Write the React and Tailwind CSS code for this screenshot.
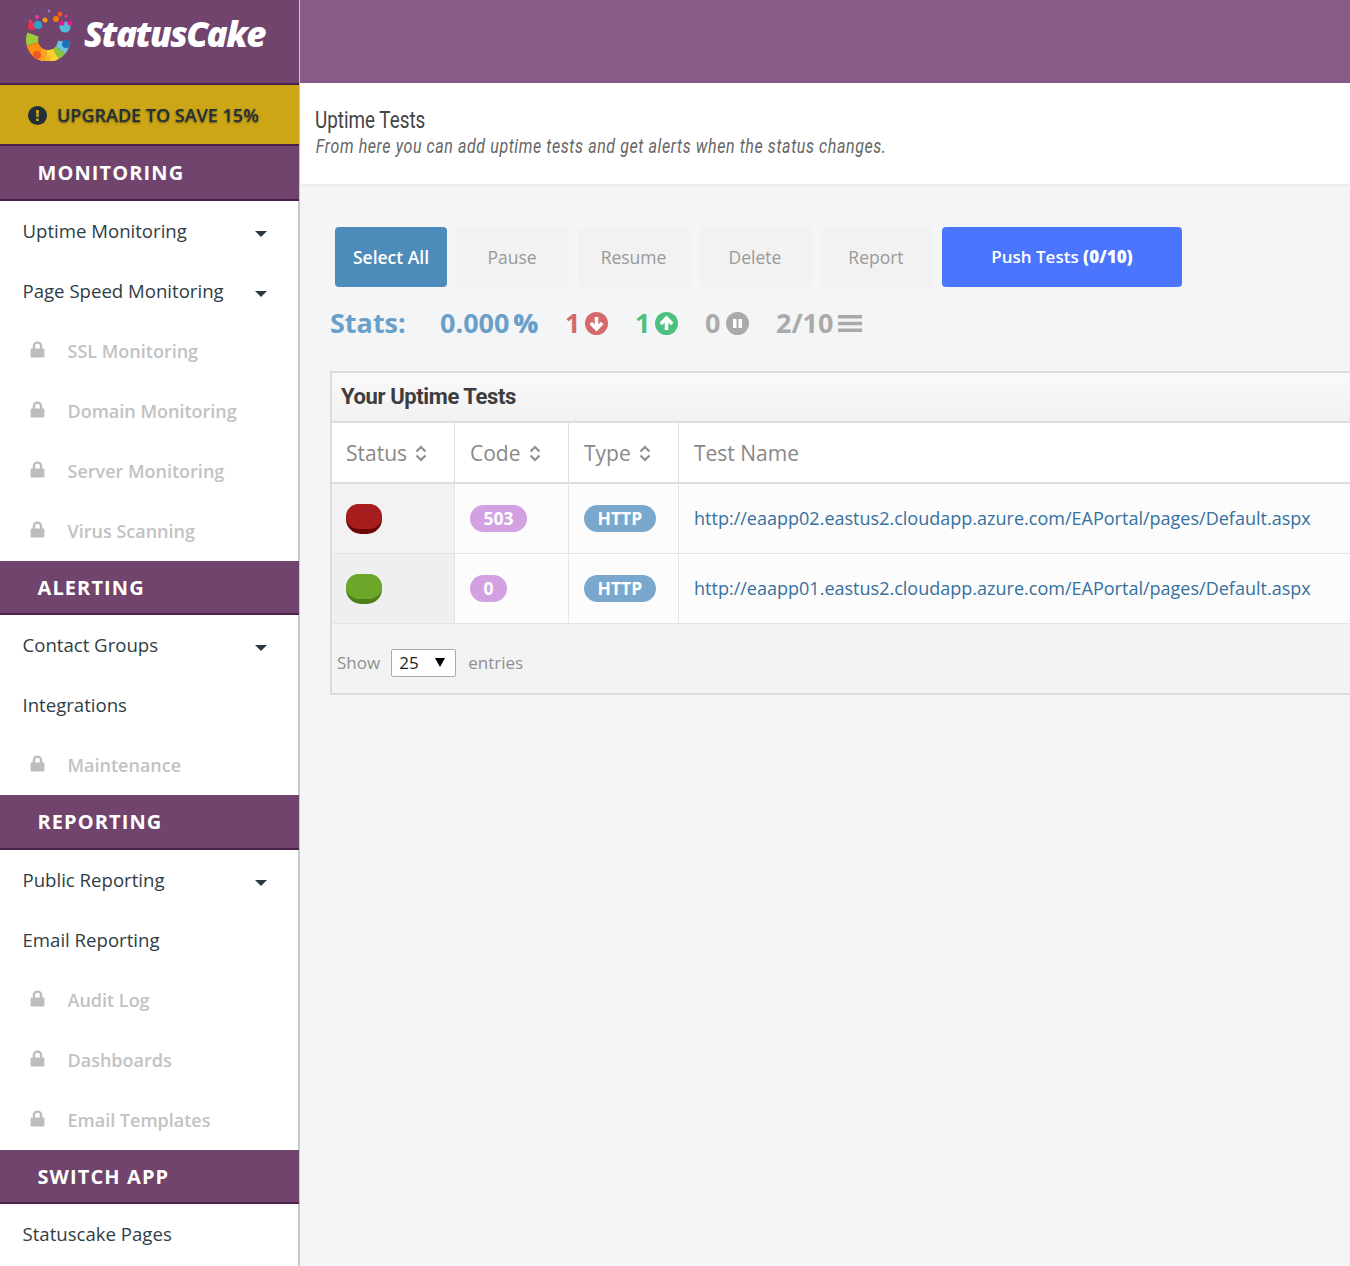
import React from "react";

const Caret = () => (
    <svg width="12" height="6" viewBox="0 0 12 6" className="absolute right-[31px] top-[30px]">
        <path d="M0 0h12L6 6z" fill="#2b3a42" />
    </svg>
);

const Lock = () => (
    <svg width="15" height="17" viewBox="0 0 14 16" className="shrink-0">
        <path
            d="M2.500 7V4.800C2.500 2.200 4.400.5 7 .5s4.500 1.700 4.500 4.300V7h1c.6 0 1 .4 1 1v6.500c0 .6-.4 1-1 1h-11c-.6 0-1-.4-1-1V8c0-.6.4-1 1-1zm2.300 0h4.400V4.800C9.200 3.500 8.300 2.700 7 2.700s-2.200.8-2.200 2.100z"
            fill="#bdbdbd"
        />
    </svg>
);

const NavItem = ({ label, caret, locked }) => (
    <div className="relative flex h-[60px] items-center">
        {locked ? (
            <div className="flex items-center pt-[1px]">
                <span className="ml-[30px] mb-[4px] w-[37.500px]">
                    <Lock />
                </span>
                <span className="text-[18px] font-semibold text-[#c2c2c2]">{label}</span>
            </div>
        ) : (
            <span className="ml-[22.500px] pb-[1px] text-[18.600px] font-medium text-[#2f3d45]">{label}</span>
        )}
        {caret && <Caret />}
    </div>
);

const NavHeading = ({ label, height }) => (
    <div
        className={`relative -mr-[1px] flex items-center border-b-2 border-[#4d1f4b] bg-[#70446c] pl-[37.500px] text-[20px] font-bold tracking-[1.1px] text-white ${height}`}
    >
        {label}
    </div>
);

const Logo = () => (
    <svg width="52" height="52" viewBox="0 0 52 52" className="shrink-0">
        <g fill="none" strokeWidth="12">
            <path d="M9 25.500A16 16 0 0 0 8.500 35.100" stroke="#9ccb3b" />
            <path d="M8.500 35.100A16 16 0 0 0 14.800 44.100" stroke="#fb8c14" />
            <path d="M14.800 44.100A16 16 0 0 0 22.600 46.900" stroke="#f9a51c" />
            <path d="M22.600 46.900A16 16 0 0 0 32 44.900" stroke="#fdd22a" />
            <path d="M32 44.900A16 16 0 0 0 36.600 40.900" stroke="#8cc63f" />
            <path d="M36.600 40.900A16 16 0 0 0 40 32.400" stroke="#6cc5e0" />
        </g>
        <circle cx="13" cy="46" r="4" fill="#f4562a" />
        <circle cx="24" cy="49" r="3" fill="#f7b733" />
        <circle cx="42" cy="35" r="4" fill="#1a72b8" />
        <circle cx="8" cy="17" r="4" fill="#f0304a" />
        <circle cx="14" cy="16" r="4" fill="#2aa5c8" />
        <circle cx="13" cy="8" r="2" fill="#e83fa0" />
        <circle cx="6" cy="12" r="1.500" fill="#e8407a" />
        <circle cx="25" cy="2" r="1.500" fill="#a070c0" />
        <circle cx="21" cy="11" r="2.500" fill="#f7941d" />
        <circle cx="32" cy="10" r="3" fill="#f57c00" />
        <circle cx="36" cy="5" r="2.500" fill="#f0552a" />
        <circle cx="42" cy="7" r="1.500" fill="#e83f8f" />
        <circle cx="41" cy="18" r="5.500" fill="#54bbdc" />
        <circle cx="38" cy="14" r="2.500" fill="#e6178d" />
        <circle cx="46" cy="14" r="2.500" fill="#e6178d" />
    </svg>
);

const Sort = () => (
    <svg width="12" height="17" viewBox="0 0 12 17" className="ml-[8px]">
        <path d="M1.500 6.500 6 2l4.500 4.500M1.500 10.500 6 15l4.500-4.500" fill="none" stroke="#8f8f8f" strokeWidth="2.200" />
    </svg>
);

const Pill = ({ children, color }) => (
    <span className={`inline-flex h-[27px] items-center rounded-full px-[13.500px] text-[17.500px] font-bold text-white ${color}`}>
        {children}
    </span>
);

const Dome = ({ top, bottom }) => (
    <div className={`h-[30px] w-[36px] rounded-[15px] ${bottom}`}>
        <div className={`h-[25px] w-[36px] rounded-[14px] ${top}`}></div>
    </div>
);

const Row = ({ dome, code, url, tdBg }) => (
    <div className="flex h-[70px] border-b border-[#e4e4e4] bg-[#fcfcfc]">
        <div className={`flex w-[123px] items-center border-r border-[#e4e4e4] pl-[14px] ${tdBg}`}>{dome}</div>
        <div className="flex w-[114px] items-center border-r border-[#e4e4e4] pl-[15px]">
            <Pill color="bg-[#d3a1e2]">{code}</Pill>
        </div>
        <div className="flex w-[110px] items-center border-r border-[#e4e4e4] pl-[15px]">
            <Pill color="bg-[#7aa7cc]">HTTP</Pill>
        </div>
        <div className="flex flex-1 items-center pl-[15px] text-[18.030px] text-[#35709f]">{url}</div>
    </div>
);

const ActionButton = ({ label, width }) => (
    <div className={`flex h-[60px] items-center justify-center rounded-[4px] bg-[#f2f2f2] pr-[2px] text-[17.500px] text-[#999999] ${width}`}>
        {label}
    </div>
);

const Th = ({ label, width, first }) => (
    <div className={`flex items-center border-r border-[#dddddd] pt-[2px] ${first ? "pl-[14px]" : "pl-[15px]"} ${width}`}>
        {label}
        <Sort />
    </div>
);

const App = () => {
    return (
        <div className="flex h-[1266px] w-[1350px] overflow-hidden bg-[#f4f5f7] font-['Open_Sans',sans-serif]">
            <aside className="h-full w-[300px] shrink-0 border-r-2 border-[#c9c9c9] bg-white">
                <div className="relative -mr-[1px] flex h-[85px] items-start border-b-2 border-[#4d1f4b] bg-[#70446c] pl-[24px] pt-[9px]">
                    <Logo />
                    <span className="ml-[8px] mt-[2px] text-[35px] leading-[46px] font-extrabold italic tracking-[-1.6px] text-white">
                        StatusCake
                    </span>
                </div>
                <div className="relative -mr-[1px] flex h-[61px] items-center border-b-2 border-[#4d1f4b] bg-[#cca617] pt-[2px] pl-[28px] text-[18px] font-semibold text-[#22303a] [text-shadow:0_1px_2px_rgba(0,0,0,0.5)]">
                    <svg width="19" height="19" viewBox="0 0 19 19" className="mr-[10px] shrink-0">
                        <circle cx="9.500" cy="9.500" r="9.500" fill="#22303a" />
                        <path d="M8 4h3l-.4 7H8.400zM8.200 12.500h2.600V15H8.200z" fill="#cca617" />
                    </svg>
                    UPGRADE TO SAVE 15%
                </div>
                <NavHeading label="MONITORING" height="h-[55px]" />
                <NavItem label="Uptime Monitoring" caret />
                <NavItem label="Page Speed Monitoring" caret />
                <NavItem label="SSL Monitoring" locked />
                <NavItem label="Domain Monitoring" locked />
                <NavItem label="Server Monitoring" locked />
                <NavItem label="Virus Scanning" locked />
                <NavHeading label="ALERTING" height="h-[54px] pt-[2px]" />
                <NavItem label="Contact Groups" caret />
                <NavItem label="Integrations" />
                <NavItem label="Maintenance" locked />
                <NavHeading label="REPORTING" height="h-[55px]" />
                <NavItem label="Public Reporting" caret />
                <NavItem label="Email Reporting" />
                <NavItem label="Audit Log" locked />
                <NavItem label="Dashboards" locked />
                <NavItem label="Email Templates" locked />
                <NavHeading label="SWITCH APP" height="h-[54px] pt-[2px]" />
                <NavItem label="Statuscake Pages" />
            </aside>

            <main className="min-w-0 flex-1">
                <div className="h-[83px] bg-[#895a87]"></div>
                <div className="h-[101px] bg-white pl-[15px] pt-[22px] shadow-[0_1px_3px_rgba(0,0,0,0.08)]">
                    <div className="origin-left scale-x-[0.785] text-[24px] leading-[30px] text-[#444444] font-['Roboto',sans-serif]">
                        Uptime Tests
                    </div>
                    <div className="w-[720px] origin-left scale-x-[0.8] pl-[1px] text-[20px] leading-[22px] tracking-[0.74px] text-[#666666] italic font-['Roboto',sans-serif]">
                        From here you can add uptime tests and get alerts when the status changes.
                    </div>
                </div>

                <div className="pl-[30px] pt-[43px]">
                    <div className="flex gap-[9px] pl-[5px]">
                        <div className="mr-[1px] flex h-[60px] w-[112px] items-center justify-center rounded-[4px] bg-[#4d8bbb] text-[17.500px] font-semibold text-white">
                            Select All
                        </div>
                        <ActionButton label="Pause" width="w-[112px]" />
                        <ActionButton label="Resume" width="w-[113px]" />
                        <ActionButton label="Delete" width="w-[112px]" />
                        <ActionButton label="Report" width="w-[112px]" />
                        <div className="flex h-[60px] w-[240px] items-center justify-center rounded-[4px] bg-[#4a75fc] text-[17px] font-semibold text-white">
                            Push Tests&nbsp;<b>(0/10)</b>
                        </div>
                    </div>

                    <div className="mt-[16px] flex h-[40px] items-center text-[27px] font-bold">
                        <span className="w-[110px] text-[#6a9fc9]">Stats:</span>
                        <span className="flex w-[125px] items-center text-[#6a9fc9]">
                            0.000
                            <span className="ml-[4px] text-[26px] font-extrabold">%</span>
                        </span>
                        <span className="flex w-[70px] items-center gap-[5px] text-[#d46a6a]">
                            1
                            <svg width="23" height="23" viewBox="0 0 23 23">
                                <circle cx="11.500" cy="11.500" r="11.500" fill="currentColor" />
                                <path d="M11.500 5v11M5.800 11l5.700 6 5.700-6" fill="none" stroke="#fff" strokeWidth="3.600" />
                            </svg>
                        </span>
                        <span className="flex w-[70px] items-center gap-[5px] text-[#4cc17f]">
                            1
                            <svg width="23" height="23" viewBox="0 0 23 23">
                                <circle cx="11.500" cy="11.500" r="11.500" fill="currentColor" />
                                <path d="M11.500 18V7M5.800 12l5.700-6 5.700 6" fill="none" stroke="#fff" strokeWidth="3.600" />
                            </svg>
                        </span>
                        <span className="flex w-[71px] items-center gap-[6px] text-[#aaaaaa]">
                            0
                            <svg width="23" height="23" viewBox="0 0 23 23">
                                <circle cx="11.500" cy="11.500" r="11.500" fill="currentColor" />
                                <path d="M7 7h3.500v9H7zM12.500 7H16v9h-3.500z" fill="#fff" />
                            </svg>
                        </span>
                        <span className="flex items-center gap-[5px] text-[#aaaaaa]">
                            2/10
                            <svg width="24" height="19" viewBox="0 0 24 19">
                                <path d="M0 1h24v3.500H0zM0 7.800h24v3.500H0zM0 14.500h24V18H0z" fill="currentColor" />
                            </svg>
                        </span>
                    </div>

                    <div className="mt-[28px] border-y-2 border-l-2 border-[#dcdcdc]">
                        <div className="flex h-[48px] items-center bg-linear-to-b from-[#fafafa] to-[#f1f1f1] pb-[2px] pl-[9px] text-[22px] font-bold tracking-[-0.4px] text-[#3d3d3d] font-['Roboto',sans-serif]">
                            Your Uptime Tests
                        </div>
                        <div className="flex h-[63px] border-y-2 border-[#dddddd] bg-white text-[21px] text-[#888888]">
                            <Th label="Status" width="w-[123px]" first />
                            <Th label="Code" width="w-[114px]" />
                            <Th label="Type" width="w-[110px]" />
                            <div className="flex items-center pl-[15px] pt-[2px]">Test Name</div>
                        </div>
                        <Row
                            dome={<Dome top="bg-[#a71d1d]" bottom="bg-[#6b0505]" />}
                            code="503"
                            url="http://eaapp02.eastus2.cloudapp.azure.com/EAPortal/pages/Default.aspx"
                            tdBg="bg-[#f2f2f2]"
                        />
                        <Row
                            dome={<Dome top="bg-[#6ca72a]" bottom="bg-[#4d7e18]" />}
                            code="0"
                            url="http://eaapp01.eastus2.cloudapp.azure.com/EAPortal/pages/Default.aspx"
                            tdBg="bg-[#efefef]"
                        />
                        <div className="flex h-[69px] items-center bg-[#f3f3f3] pl-[5px] pt-[8px] text-[17px] text-[#8f8f8f]">
                            Show
                            <div className="ml-[11px] flex h-[28px] w-[65px] items-center justify-between rounded-[2px] border border-[#aaaaaa] bg-white px-[7px] text-[#222222]">
                                25
                                <svg width="10" height="9" viewBox="0 0 10 9" className="mr-[3px]">
                                    <path d="M0 0h10L5 9z" fill="#000" />
                                </svg>
                            </div>
                            <span className="ml-[12px]">entries</span>
                        </div>
                    </div>
                </div>
            </main>
        </div>
    );
};

export default App;
